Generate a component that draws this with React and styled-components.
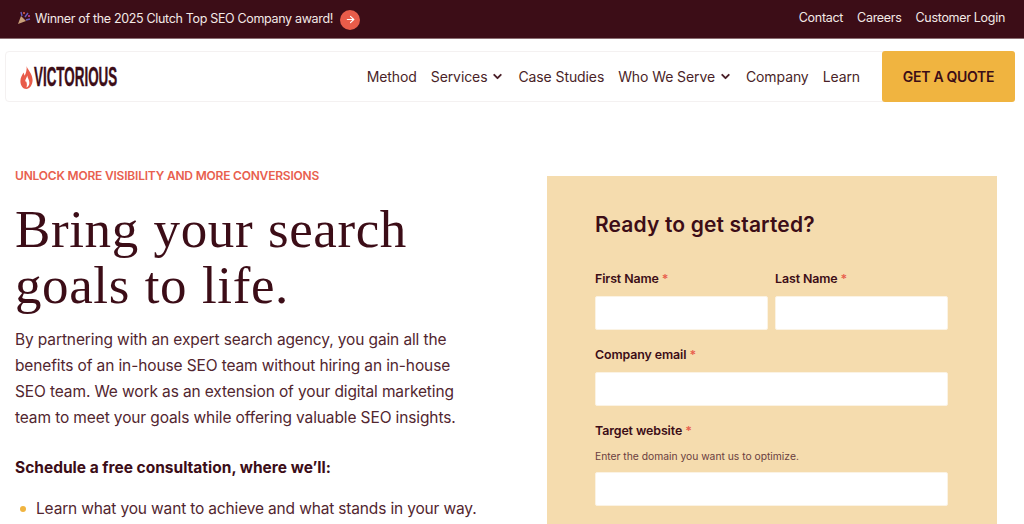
import React from 'react'
import styled, { createGlobalStyle } from 'styled-components'
import { ArrowRight, ChevronDown } from 'lucide-react'

const GlobalStyle = createGlobalStyle`
    html, body {
        margin: 0;
        height: 524px;
        overflow: hidden;
        background: #fff;
    }
    * { box-sizing: border-box; }
`
const Page = styled.div`
    width: 1024px;
    height: 524px;
    overflow: hidden;
    font-family: Inter, "Liberation Sans", sans-serif;
    color: #3c0d17;
`
const TopBar = styled.div`
    height: 39px;
    background: #3c0d17;
    border-bottom: 1px solid #8a6d72;
    display: flex;
    align-items: center;
    justify-content: space-between;
    padding: 0 19px 2px 17px;
    color: #f3e9e6;
    font-size: 12.5px;
`
const Award = styled.div`
    display: flex;
    align-items: center;
`
const AwardText = styled.span`
    margin-left: 4px;
    letter-spacing: -0.33px;
`
const ArrowDot = styled.span`
    width: 20px;
    height: 20px;
    margin: 3px 0 0 7px;
    border-radius: 50%;
    background: #e85c4a;
    color: #fff;
    display: flex;
    align-items: center;
    justify-content: center;
`
const TopLinks = styled.div`
    display: flex;
    gap: 14px;
    font-size: 12.5px;
    letter-spacing: -0.3px;
    margin-top: -2px;
`
const NavBar = styled.div`
    height: 51px;
    margin: 12px 9px 0 5px;
    border: 1px solid #f4f1f1;
    border-radius: 4px;
    display: flex;
    align-items: center;
    padding-left: 14px;
`
const Logo = styled.div`
    display: flex;
    align-items: center;
    gap: 1px;
    flex: 1;
    margin-top: 1px;
`
const LogoWord = styled.span`
    font-family: "Liberation Sans", sans-serif;
    font-weight: 700;
    font-size: 27.5px;
    line-height: 1;
    color: #3c0d17;
    display: inline-block;
    transform: scaleX(0.488);
    transform-origin: left center;
    -webkit-text-stroke: 0.4px #3c0d17;
    width: 84px;
`
const NavLinks = styled.div`
    display: flex;
    align-items: center;
    gap: 14px;
    margin-right: 22px;
    font-size: 14px;
    letter-spacing: -0.1px;
`
const NavItem = styled.span`
    display: flex;
    align-items: center;
    gap: ${props => props.$menu ? "4px" : "0"};
    color: #4a1f28;
`
const QuoteButton = styled.div`
    width: 133px;
    height: 51px;
    margin: -1px -1px -1px 0;
    background: #f0b440;
    border-radius: 3px;
    display: flex;
    align-items: center;
    justify-content: center;
    font-size: 14px;
    font-weight: 600;
    letter-spacing: -0.3px;
`
const Main = styled.main`
    display: grid;
    grid-template-columns: 532px 450px;
    padding: 66px 0 0 15px;
`
const Intro = styled.section`
    padding-top: 0;
`
const Eyebrow = styled.div`
    color: #e8604e;
    font-size: 12px;
    font-weight: 600;
    line-height: 16px;
    letter-spacing: -0.2px;
`
const Title = styled.h1`
    margin: 17px 0 0;
    font-family: "Liberation Serif", serif;
    font-weight: 400;
    font-size: 53px;
    line-height: 56px;
    letter-spacing: 0.6px;
    word-spacing: 1px;
    color: #3c0d17;
`
const Lead = styled.p`
    margin: 14px 0 0;
    font-size: 15.5px;
    line-height: 26px;
    color: #52262f;
    letter-spacing: -0.12px;
    white-space: nowrap;
`
const Sub = styled.p`
    margin: 24px 0 0;
    font-size: 15.5px;
    font-weight: 700;
    line-height: 26px;
`
const Points = styled.ul`
    margin: 15px 0 0;
    padding: 0;
    list-style: none;
`
const Point = styled.li`
    display: flex;
    align-items: center;
    gap: 10px;
    padding-left: 5px;
    font-size: 15.5px;
    line-height: 26px;
    color: #52262f;
    letter-spacing: -0.16px;
    white-space: nowrap;
    &::before {
        content: "";
        width: 6px;
        height: 6px;
        border-radius: 50%;
        background: #f0b440;
    }
`
const FormPanel = styled.form`
    background: #f5dcae;
    height: 360px;
    margin-top: 8px;
    padding: 35px 49px 0 48px;
`
const FormTitle = styled.h2`
    margin: 0 0 32px;
    font-size: 21px;
    line-height: 27px;
    font-weight: 600;
    color: #3c0d17;
    letter-spacing: 0.15px;
`
const NameRow = styled.div`
    display: grid;
    grid-template-columns: 173px 173px;
    gap: 7px;
`
const Field = styled.div`
    margin-bottom: ${props => props.$last ? "0" : "16px"};
`
const Label = styled.label`
    display: block;
    font-size: 12.4px;
    font-weight: 600;
    line-height: 18px;
    margin-bottom: ${props => props.$hinted ? "9px" : "8px"};
    color: #3c0d17;
    letter-spacing: -0.1px;
`
const Req = styled.span`
    color: #e8604e;
`
const Hint = styled.div`
    font-size: 10.3px;
    line-height: 14px;
    color: #6a4040;
    margin: 0 0 9px;
`
const Input = styled.input`
    display: block;
    width: 100%;
    height: 34px;
    border: 1px solid #fbf3e4;
    border-radius: 2px;
    background: #fff;
    padding: 0 8px;
`

const Flame = () => (
    <svg width="13" height="23" viewBox="0 0 13 23">
        <path d="M6.6 0C7 3 12.6 7.5 12.6 14C12.6 19 9.5 23 6.3 23C3 23 0.4 19.5 0.4 15C0.4 11.5 2.4 9 3.6 6.6C4 8 4.2 9 4.6 9.8C6 7.5 7 3.5 6.6 0Z" fill="#e85c4a" />
        <path d="M7.2 9.5C7.4 12 9.6 14 9.4 17C9.2 19.5 7.8 21 6.4 21.4C7.4 19.2 6.8 16.5 6 15.2C5.2 16.2 5 15 5.6 13.4C6.2 12.2 7 11 7.2 9.5Z" fill="#fff" />
    </svg>
)

const Popper = () => (
    <svg width="14" height="14" viewBox="0 0 14 14">
        <path d="M1 13L4 5L9 10Z" fill="#c9a07a" />
        <path d="M5 5L4 1M8 6L11 2M9 9L13 8" stroke="#6a5fc0" strokeWidth="1.4" />
        <circle cx="7" cy="2" r="1" fill="#e85c4a" />
        <circle cx="12" cy="5" r="1" fill="#d04a9a" />
    </svg>
)

export default function App() {
    return (
        <Page>
            <GlobalStyle />
            <TopBar>
                <Award>
                    <Popper />
                    <AwardText>Winner of the 2025 Clutch Top SEO Company award!</AwardText>
                    <ArrowDot><ArrowRight size={11} strokeWidth={2.5} /></ArrowDot>
                </Award>
                <TopLinks>
                    <span>Contact</span>
                    <span>Careers</span>
                    <span>Customer Login</span>
                </TopLinks>
            </TopBar>
            <NavBar>
                <Logo>
                    <Flame />
                    <LogoWord>VICTORIOUS</LogoWord>
                </Logo>
                <NavLinks>
                    <NavItem>Method</NavItem>
                    <NavItem $menu>Services <ChevronDown size={13} strokeWidth={3.5} /></NavItem>
                    <NavItem>Case Studies</NavItem>
                    <NavItem $menu>Who We Serve <ChevronDown size={13} strokeWidth={3.5} /></NavItem>
                    <NavItem>Company</NavItem>
                    <NavItem>Learn</NavItem>
                </NavLinks>
                <QuoteButton>GET A QUOTE</QuoteButton>
            </NavBar>
            <Main>
                <Intro>
                    <Eyebrow>UNLOCK MORE VISIBILITY AND MORE CONVERSIONS</Eyebrow>
                    <Title>Bring your search<br />goals to life.</Title>
                    <Lead>
                        By partnering with an expert search agency, you gain all the<br />
                        benefits of an in-house SEO team without hiring an in-house<br />
                        SEO team. We work as an extension of your digital marketing<br />
                        team to meet your goals while offering valuable SEO insights.
                    </Lead>
                    <Sub>Schedule a free consultation, where we’ll:</Sub>
                    <Points>
                        <Point>Learn what you want to achieve and what stands in your way.</Point>
                    </Points>
                </Intro>
                <FormPanel>
                    <FormTitle>Ready to get started?</FormTitle>
                    <NameRow>
                        <Field>
                            <Label>First Name <Req>*</Req></Label>
                            <Input />
                        </Field>
                        <Field>
                            <Label>Last Name <Req>*</Req></Label>
                            <Input />
                        </Field>
                    </NameRow>
                    <Field>
                        <Label>Company email <Req>*</Req></Label>
                        <Input />
                    </Field>
                    <Field $last>
                        <Label $hinted>Target website <Req>*</Req></Label>
                        <Hint>Enter the domain you want us to optimize.</Hint>
                        <Input />
                    </Field>
                </FormPanel>
            </Main>
        </Page>
    )
}
